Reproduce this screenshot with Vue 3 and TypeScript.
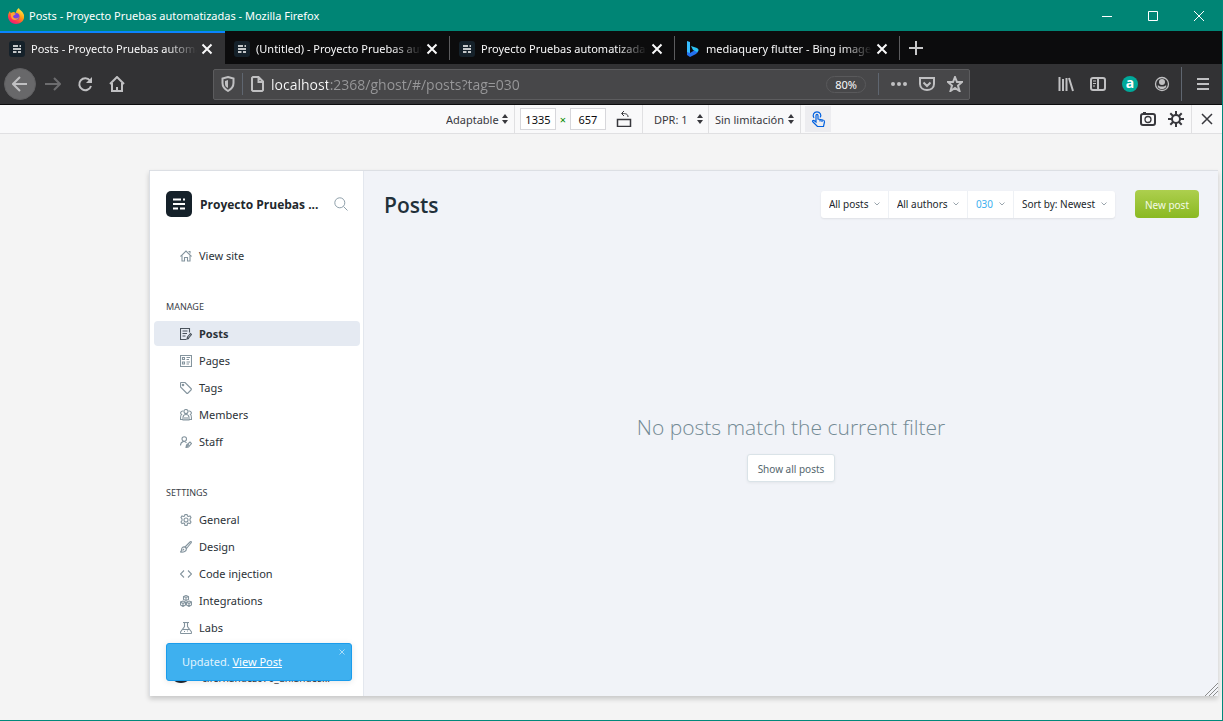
<script setup lang="ts">
import { ref } from 'vue'

interface Tab { title: string; icon: 'ghost' | 'bing' }
interface NavItem { label: string; paths: string[]; active?: boolean }

const tabs: Tab[] = [
  { title: 'Posts - Proyecto Pruebas automatizadas', icon: 'ghost' },
  { title: '(Untitled) - Proyecto Pruebas automatizadas', icon: 'ghost' },
  { title: 'Proyecto Pruebas automatizadas', icon: 'ghost' },
  { title: 'mediaquery flutter - Bing images', icon: 'bing' },
]

const url = ref('localhost:2368/ghost/#/posts?tag=030')
const viewportWidth = ref('1335')
const viewportHeight = ref('657')

const site: NavItem[] = [
  { label: 'View site', paths: ['M1 13L12 2l11 11', 'M4 11v11h5v-7h6v7h5V11', 'M17 3h3v4'] },
]

const manage: NavItem[] = [
  {
    label: 'Posts',
    active: true,
    paths: ['M19 9V1H1v22h11', 'M5 6h10M5 11h9M5 16h6', 'M14 22l1-4 6-7 2 2-6 7zM14 22l4-1'],
  },
  {
    label: 'Pages',
    paths: ['M1 1h22v22H1z', 'M5 5h4v4H5zM5 14h4v4H5z', 'M13 5h7M13 9h5M13 14h7M13 18h5'],
  },
  {
    label: 'Tags',
    paths: ['M1 2v8l12 12c1 1 2 1 3 0l6-6c1-1 1-2 0-3L10 1H2z', 'M4.500 6a1.500 1.500 0 1 0 3 0a1.500 1.500 0 1 0-3 0'],
  },
  {
    label: 'Members',
    paths: [
      'M8 5a4 4 0 1 0 8 0a4 4 0 1 0-8 0', 'M6 22v-5c0-8 12-8 12 0v5z', 'M10 22v-6M14 22v-6',
      'M7 4C1 3 0 9 3 11c-2 1-2 5-2 10h5', 'M17 4c6-1 7 5 4 7 2 1 2 5 2 10h-5',
    ],
  },
  {
    label: 'Staff',
    paths: ['M4 6a4.500 4.500 0 1 0 9 0a4.500 4.500 0 1 0-9 0', 'M1 19c0-9 9-10 12-5', 'M12 23l1-5 7-6 3 3-6 7zM12 23l6-6'],
  },
]

const settings: NavItem[] = [
  {
    label: 'General',
    paths: [
      'M10 1h4l1 3 2 1 3-1 2 3-2 3v3l2 3-2 3-3-1-2 1-1 4h-4l-1-4-2-1-3 1-2-3 2-3v-3L2 7l2-3 3 1 2-1z',
      'M8 12a4 4 0 1 0 8 0a4 4 0 1 0-8 0',
    ],
  },
  { label: 'Design', paths: ['M10 12L20 2c2-2 4 0 2 2L13 15z', 'M10 12c-5-1-7 2-7 6 0 2-1 3-2 4 6 1 12-1 12-7z', 'M5 19l3-3'] },
  { label: 'Code injection', paths: ['M8 5l-7 7 7 7', 'M16 5l7 7-7 7'] },
  {
    label: 'Integrations',
    paths: [
      'M12 1l5 2v6l-5 2-5-2V3zM7 3l5 2 5-2M12 5v6',
      'M6 12l5 2v6l-5 3-5-3v-6zM1 14l5 3 5-3M6 17v6',
      'M18 12l5 2v6l-5 3-5-3v-6zM13 14l5 3 5-3M18 17v6',
    ],
  },
  { label: 'Labs', paths: ['M6 1h12', 'M9 1v8L1 20c-1 2 0 3 2 3h18c2 0 3-1 2-3L15 9V1', 'M5 15h14', 'M8 19h2M14 18h2'] },
]

const groups = [
  { title: '', items: site },
  { title: 'Manage', items: manage },
  { title: 'Settings', items: settings },
]

const filters = [
  { name: 'Post type', value: 'All posts', on: false },
  { name: 'Author', value: 'All authors', on: false },
  { name: 'Tag', value: '030', on: true },
  { name: 'Order', value: 'Sort by: Newest', on: false },
]
</script>

<template>
  <div class="window">
    <header class="titlebar">
      <svg class="firefox" viewBox="0 0 16 16" aria-hidden="true">
        <defs>
          <linearGradient id="fire" x1="0.8" y1="0" x2="0.2" y2="1">
            <stop offset="0" stop-color="#fff44f" />
            <stop offset="0.45" stop-color="#ff980e" />
            <stop offset="0.75" stop-color="#ff3750" />
            <stop offset="1" stop-color="#e31587" />
          </linearGradient>
        </defs>
        <path d="M2 3c0 1 0 1 1 2 1-1 2-1 3-1l2 1c0-2 1-4 3-5 0 2 4 3 5 7 1 5-3 9-8 9S0 12 0 8c0-2 1-4 2-5z" fill="url(#fire)" />
        <circle cx="8" cy="8.500" r="3.500" fill="#7542e5" />
        <path d="M3 5c2 0 4 0 5 1-1 1-3 1-3 3 2 2 4 2 6 0-1 4-8 4-8-1z" fill="#ffa436" />
      </svg>
      <span class="window-title">Posts - Proyecto Pruebas automatizadas - Mozilla Firefox</span>
      <div class="window-buttons">
        <button type="button" aria-label="Minimize"><svg viewBox="0 0 12 12"><path d="M1 6.500h10" /></svg></button>
        <button type="button" aria-label="Maximize"><svg viewBox="0 0 12 12"><path d="M1.500 1.500h9v9h-9z" /></svg></button>
        <button type="button" aria-label="Close"><svg viewBox="0 0 12 12"><path d="M1 1l10 10M11 1L1 11" /></svg></button>
      </div>
    </header>

    <div class="tabs">
      <div v-for="(tab, i) in tabs" :key="i" class="tab" :class="{ current: i === 0 }">
        <button type="button" class="tab-main">
          <svg v-if="tab.icon === 'ghost'" class="favicon" viewBox="0 0 16 16">
            <rect width="16" height="16" rx="3" fill="#15212a" />
            <path d="M4 5h5M10.500 5H12M4 8h8M4 11h3.500M9 11h3" stroke="#fff" stroke-width="1.500" />
          </svg>
          <svg v-else class="favicon" viewBox="0 0 16 16">
            <path d="M3 0l3 1v11l-3 2z" fill="#37bdff" />
            <path d="M3 11l3 1 5-3 3-1c1 3-1 4-2 5l-6 3-3-2z" fill="#2370ee" />
            <path d="M7 5l6 2c2 1 2 3 0 4l-4-2z" fill="#2bc3f5" />
          </svg>
          <span>{{ tab.title }}</span>
        </button>
        <button type="button" class="tab-close" aria-label="Close tab">
          <svg viewBox="0 0 12 12"><path d="M1.500 1.500l9 9M10.500 1.500l-9 9" /></svg>
        </button>
      </div>
      <button type="button" class="new-tab" aria-label="New tab">
        <svg viewBox="0 0 14 14"><path d="M7 0v14M0 7h14" /></svg>
      </button>
    </div>

    <nav class="navbar" aria-label="Browser">
      <button type="button" class="tool back" aria-label="Back">
        <svg viewBox="0 0 16 16"><path d="M15 8H1M8 1L1 8l7 7" /></svg>
      </button>
      <button type="button" class="tool dim" aria-label="Forward">
        <svg viewBox="0 0 16 16"><path d="M0 8h15M9 2l6 6-6 6" /></svg>
      </button>
      <button type="button" class="tool" aria-label="Reload">
        <svg viewBox="0 0 16 16"><path d="M13 4.500A6 6 0 1 0 14 10" /><path d="M15 1v6H9z" class="solid" /></svg>
      </button>
      <button type="button" class="tool" aria-label="Home">
        <svg viewBox="0 0 16 16"><path d="M1 8l7-7 7 7M3 7v8h10V7M8 15v-4" /></svg>
      </button>
      <div class="address">
        <button type="button" class="tool small" aria-label="Tracking protection">
          <svg viewBox="0 0 16 16"><path d="M8 1l5.500 1.500V7c0 4-2 6-5.500 8-3.500-2-5.500-4-5.500-8V2.500z" /><path d="M8 4l-3 1v3c0 2 1 3 3 4z" class="solid" /></svg>
        </button>
        <i class="rule"></i>
        <button type="button" class="tool small" aria-label="Site information">
          <svg viewBox="0 0 16 16"><path d="M4 1h5.500L14 5.500V14l-1 1H4l-1-1V2zM9.500 1v5H14" /></svg>
        </button>
        <input v-model="url" type="text" class="url" aria-label="Address" />
        <button type="button" class="zoom">80%</button>
        <i class="rule end"></i>
        <button type="button" class="tool small" aria-label="Page actions">
          <svg viewBox="0 0 16 16"><g class="solid"><circle cx="2" cy="8" r="2" /><circle cx="8" cy="8" r="2" /><circle cx="14" cy="8" r="2" /></g></svg>
        </button>
        <button type="button" class="tool small" aria-label="Save to Pocket">
          <svg viewBox="0 0 16 16"><path d="M1 2h14v6c0 8-14 8-14 0zM4.500 6.500L8 10l3.500-3.500" /></svg>
        </button>
        <button type="button" class="tool small" aria-label="Bookmark">
          <svg viewBox="0 0 16 16"><path d="M8 1l2 5h5l-4 3.500 1.500 5.500L8 12l-4.500 3L5 9.500 1 6h5z" /></svg>
        </button>
      </div>
      <button type="button" class="tool" aria-label="Library">
        <svg viewBox="0 0 16 16"><path d="M1.500 1v14M5 3v12M8.500 2v13M11 2l4 13" /></svg>
      </button>
      <button type="button" class="tool" aria-label="Sidebars">
        <svg viewBox="0 0 16 16"><rect x="1" y="2" width="14" height="12" rx="2" /><path d="M8 2v12" /><path d="M3 5h3M3 7.500h3M3 10h2" stroke-width="1" /></svg>
      </button>
      <button type="button" class="tool" aria-label="Extension">
        <span class="ext">a</span>
      </button>
      <button type="button" class="tool" aria-label="Account">
        <svg viewBox="0 0 16 16"><circle cx="8" cy="8" r="6.500" stroke-width="1.300" /><circle cx="8" cy="6" r="3" class="solid" /><path d="M4 9c1 2 7 2 8 0 1 2-1 4-4 4s-5-2-4-4z" class="solid" /></svg>
      </button>
      <i class="rule tall"></i>
      <button type="button" class="tool" aria-label="Menu">
        <svg viewBox="0 0 16 16"><path d="M2 3h12M2 8h12M2 13h12" /></svg>
      </button>
    </nav>

    <div class="rdm">
      <div class="rdm-main">
        <label class="pick"><select aria-label="Device"><option>Adaptable</option></select><svg viewBox="0 0 6 10"><path d="M0 4l3-4 3 4zM0 6l3 4 3-4z" /></svg></label>
        <div class="size">
          <input v-model="viewportWidth" type="text" aria-label="Width" />
          <span>×</span>
          <input v-model="viewportHeight" type="text" aria-label="Height" />
          <button type="button" class="plain rotate" aria-label="Rotate">
            <svg viewBox="0 0 16 16"><path d="M1.500 8.500h13v7h-13z" /><path d="M12 6c0-3-2-3.500-6-3.500M8 0L5.500 2.500 8 5" stroke-width="1" /></svg>
          </button>
        </div>
        <label class="pick wide"><select aria-label="Device pixel ratio"><option>DPR: 1</option></select><svg viewBox="0 0 6 10"><path d="M0 4l3-4 3 4zM0 6l3 4 3-4z" /></svg></label>
        <label class="pick"><select aria-label="Throttling"><option>Sin limitación</option></select><svg viewBox="0 0 6 10"><path d="M0 4l3-4 3 4zM0 6l3 4 3-4z" /></svg></label>
        <button type="button" class="touch" aria-label="Touch simulation">
          <svg viewBox="0 0 16 16"><path d="M6 10V4.500c0-1.500 2-1.500 2 0V8l5 1c1 0 1.500 1 1.500 2l-1 4.500h-6L3 11c-1-1 0-2 1-1.500l2 1.500zM10 8.500v2M12 9v2" /><path d="M4 7C2 4 4 .8 7 .8S12 4 10 6.500" /></svg>
        </button>
      </div>
      <div class="rdm-end">
        <button type="button" class="plain" aria-label="Screenshot">
          <svg viewBox="0 0 16 16"><rect x="1" y="3" width="14" height="11" rx="2" stroke-width="2" /><path d="M3 2h3" stroke-width="2" /><circle cx="8" cy="8.500" r="3" stroke-width="1.300" /></svg>
        </button>
        <button type="button" class="plain" aria-label="Settings">
          <svg viewBox="0 0 16 16"><circle cx="8" cy="8" r="4" stroke-width="2" /><path d="M8 0v4M8 12v4M0 8h4M12 8h4M2.300 2.300l3 3M10.700 10.700l3 3M2.300 13.700l3-3M10.700 5.300l3-3" stroke-width="2" /></svg>
        </button>
        <button type="button" class="plain end" aria-label="Close responsive design mode">
          <svg viewBox="0 0 16 16"><path d="M3 3l10 10M13 3L3 13" /></svg>
        </button>
      </div>
    </div>

    <div class="stage">
      <div class="viewport">
        <aside class="sidebar">
          <div class="brand">
            <svg class="logo" viewBox="0 0 26 26"><rect width="26" height="26" rx="5" fill="#15212a" /><path d="M7 8.500h8M17 8.500h2M7 13h12M7 17.500h5M14 17.500h5" stroke="#fff" stroke-width="2" /></svg>
            <strong>Proyecto Pruebas ...</strong>
            <button type="button" class="search" aria-label="Search">
              <svg viewBox="0 0 14 14"><circle cx="5.800" cy="5.800" r="5" /><path d="M9.500 9.500l4 4" /></svg>
            </button>
          </div>
          <section v-for="(group, g) in groups" :key="g" class="group">
            <h2 v-if="group.title">{{ group.title }}</h2>
            <a v-for="item in group.items" :key="item.label" href="#" :class="{ active: item.active }">
              <svg viewBox="0 0 24 24"><path v-for="(d, i) in item.paths" :key="i" :d="d" /></svg>
              <span>{{ item.label }}</span>
            </a>
          </section>
          <div class="account"><i class="avatar"></i><span>c.fernandez070_uniandes...</span></div>
          <div class="toast" role="status">
            <span>Updated. <a href="#">View Post</a></span>
            <button type="button" aria-label="Dismiss"><svg viewBox="0 0 6 6"><path d="M0.500 0.500l5 5M5.500 0.500l-5 5" /></svg></button>
          </div>
        </aside>

        <main class="content">
          <div class="head">
            <h1>Posts</h1>
            <div class="filters">
              <label v-for="f in filters" :key="f.name" :class="{ on: f.on }">
                <select :aria-label="f.name"><option>{{ f.value }}</option></select>
                <svg viewBox="0 0 6 4"><path d="M0.500 0.500L3 3l2.500-2.500" /></svg>
              </label>
            </div>
            <button type="button" class="new-post">New post</button>
          </div>
          <div class="empty">
            <p>No posts match the current filter</p>
            <button type="button">Show all posts</button>
          </div>
          <svg class="grip" viewBox="0 0 14 14"><path d="M1 14L14 1M5 14l9-9M9 14l5-5" /></svg>
        </main>
      </div>
    </div>
  </div>
</template>

<style>
html,
body {
  margin: 0;
  overflow: hidden;
}
</style>

<style scoped>
* {
  box-sizing: border-box;
}
.window {
  display: flex;
  flex-direction: column;
  height: 100vh;
  border-right: 1px solid #00897b;
  border-bottom: 1px solid #00897b;
  background: #f4f4f4;
  font-family: 'Noto Sans', 'Open Sans', sans-serif;
  font-size: 12px;
}
button,
input,
select {
  margin: 0;
  padding: 0;
  border: 0;
  background: none;
  color: inherit;
  font: inherit;
}
select {
  appearance: none;
}
svg {
  display: block;
  flex: none;
  fill: none;
  stroke: currentColor;
}
.titlebar {
  display: flex;
  align-items: center;
  height: 31px;
  padding-left: 8px;
  background: #008575;
  color: #fff;
  font-size: 11px;
}
.firefox,
.favicon {
  width: 16px;
  height: 16px;
  stroke: none;
}
.window-title {
  flex: 1;
  padding-left: 5px;
}
.window-buttons {
  display: flex;
}
.window-buttons button {
  display: grid;
  place-items: center;
  width: 46px;
  height: 31px;
}
.window-buttons svg {
  width: 12px;
  height: 12px;
}
.tabs {
  display: flex;
  height: 33px;
  background: #0c0c0d;
  color: #f9f9fa;
}
.tab {
  display: flex;
  align-items: center;
  width: 225px;
  padding: 2px 8px 0 9px;
  background: linear-gradient(#5c5c5e, #5c5c5e) right 5px / 1px 24px no-repeat;
}
.tab.current {
  padding-top: 0;
  border-top: 2px solid #0a84ff;
  background: #323234;
}
.tab-main {
  display: flex;
  flex: 1;
  align-items: center;
  gap: 6px;
  min-width: 0;
  font-size: 11px;
}
.tab-main span {
  flex: 1;
  overflow: hidden;
  text-align: left;
  white-space: nowrap;
  mask-image: linear-gradient(to left, transparent, #000 30px);
}
.tab-close {
  display: grid;
  place-items: center;
  width: 20px;
  height: 20px;
}
.tab-close svg {
  width: 12px;
  height: 12px;
  stroke-width: 2;
}
.new-tab {
  display: grid;
  place-items: center;
  width: 32px;
  color: #c8c8c9;
}
.new-tab svg {
  width: 14px;
  height: 14px;
  stroke-width: 2;
}
.navbar {
  display: flex;
  align-items: center;
  height: 41px;
  padding: 0 3px 0 4px;
  border-bottom: 1px solid #0c0c0d;
  background: #323234;
  color: #c0c0c2;
}
.tool {
  display: grid;
  flex: none;
  place-items: center;
  width: 32px;
  height: 32px;
}
.tool svg {
  width: 16px;
  height: 16px;
  stroke-width: 2;
}
.tool.small {
  width: 28px;
  height: 28px;
}
.solid {
  fill: currentColor;
  stroke: none;
}
.back {
  margin-right: 1px;
  border: 1px solid #5f5f61;
  border-radius: 50%;
  background: #68686a;
}
.dim {
  color: #6c6c6e;
}
.address {
  display: flex;
  flex: 1;
  align-items: center;
  height: 31px;
  margin: 0 80px;
  border: 1px solid #5c5c5e;
  border-radius: 2px;
  background: #474749;
}
.rule {
  width: 1px;
  height: 22px;
  background: #5f6670;
}
.rule.end {
  margin-right: 6px;
}
.rule.tall {
  height: 34px;
  margin: 0 5px 0 3px;
}
.url {
  flex: 1;
  min-width: 0;
  background: linear-gradient(to right, #f9f9fa 57px, #98989a 57px);
  background-clip: text;
  color: transparent;
  font-family: 'Open Sans', sans-serif;
  font-size: 14px;
}
.zoom {
  height: 17px;
  margin-right: 12px;
  padding: 0 8px;
  border: 1px solid #59595b;
  border-radius: 9px;
  color: #f9f9fa;
  font-size: 11px;
  line-height: 15px;
}
.ext {
  width: 16px;
  height: 16px;
  border-radius: 50%;
  background: #00a99a;
  color: #fff;
  font-size: 14px;
  font-weight: 700;
  line-height: 14px;
  text-align: center;
}
.rdm {
  display: flex;
  height: 29px;
  border-bottom: 1px solid #e0e0e2;
  background: #f9f9fa;
  color: #38383d;
  font-size: 11px;
}
.rdm::before {
  content: '';
  flex: 9;
}
.rdm-main {
  display: flex;
  align-items: stretch;
}
.pick {
  display: flex;
  align-items: center;
  gap: 3px;
  padding: 0 6px;
  border-right: 1px solid #e0e0e2;
}
.pick.wide {
  gap: 9px;
  padding: 0 5px 0 11px;
}
.pick svg {
  width: 6px;
  height: 10px;
  fill: currentColor;
  stroke: none;
}
.size {
  display: flex;
  align-items: center;
  padding: 0 4px 0 5px;
  border-right: 1px solid #e0e0e2;
}
.size input {
  width: 36px;
  height: 22px;
  border: 1px solid #d7d7db;
  background: #fff;
  color: #0c0c0d;
  text-align: center;
}
.size span {
  width: 14px;
  color: #058b00;
  text-align: center;
}
.plain {
  display: grid;
  place-items: center;
  width: 28px;
}
.plain.rotate {
  margin-left: 4px;
}
.plain svg,
.touch svg {
  width: 16px;
  height: 16px;
  stroke-width: 1.5;
}
.touch {
  display: grid;
  place-items: center;
  align-self: center;
  width: 26px;
  height: 26px;
  margin-left: 4px;
  background: #ededf0;
  color: #0060df;
}
.touch svg {
  stroke-width: 1.2;
}
.rdm-end {
  display: flex;
  flex: 8;
  justify-content: flex-end;
}
.plain.end {
  width: 31px;
  margin-left: 1px;
  border-left: 1px solid #e0e0e2;
}
.stage {
  display: flex;
  flex: 1;
  min-height: 0;
  padding: 36px 4px 24px 149px;
}
.viewport {
  display: flex;
  flex: 1;
  border: 1px solid #dcdfe4;
  border-right: 0;
  border-bottom: 0;
  background: #f1f3f8;
  box-shadow: 0 3px 5px rgba(0, 0, 0, 0.18);
  color: #394047;
  font-size: 11px;
}
.sidebar {
  position: relative;
  width: 214px;
  padding: 20px 3px 0 4px;
  border-right: 1px solid #e3e7ee;
  background: #fff;
}
.brand {
  display: flex;
  align-items: center;
  height: 26px;
  padding: 0 12px;
  color: #22272c;
}
.logo {
  width: 26px;
  height: 26px;
  stroke: none;
}
.brand strong {
  flex: 1;
  padding-left: 8px;
  font-family: 'Open Sans', sans-serif;
  font-size: 12px;
  white-space: nowrap;
}
.search {
  color: #8fa0aa;
}
.search svg {
  width: 14px;
  height: 14px;
}
.group {
  display: flex;
  flex-direction: column;
  gap: 2px;
  margin-top: 26px;
}
.group + .group {
  margin-top: 32px;
}
h2 {
  margin: 0 0 5px;
  padding-left: 12px;
  color: #394047;
  font-size: 9px;
  font-weight: 400;
  line-height: 14px;
  text-transform: uppercase;
}
.group a {
  display: flex;
  align-items: center;
  gap: 7px;
  height: 25px;
  padding-left: 26px;
  border-radius: 4px;
  color: #2b3238;
  text-decoration: none;
}
.group a svg {
  width: 12px;
  height: 12px;
  color: #84949e;
  stroke-width: 2.2;
}
.group a.active {
  background: #e5eaf2;
  font-weight: 700;
}
.group a.active svg {
  color: #4a535c;
}
.account {
  position: absolute;
  bottom: 11px;
  left: 20px;
  display: flex;
  align-items: flex-end;
  gap: 10px;
  font-size: 10px;
  line-height: 14px;
}
.avatar {
  width: 22px;
  height: 22px;
  margin-bottom: 2px;
  border-radius: 50%;
  background: #1d2733;
}
.toast {
  position: absolute;
  right: 11px;
  bottom: 15px;
  left: 16px;
  display: flex;
  align-items: center;
  justify-content: space-between;
  height: 38px;
  padding: 0 6px 2px 15px;
  border: 1px solid #1a9cec;
  border-radius: 3px;
  background: #3eb0ef;
  box-shadow: 0 1px 6px rgba(0, 0, 0, 0.1);
  color: #e0f3fd;
}
.toast a {
  color: #fff;
}
.toast button {
  align-self: flex-start;
  padding-top: 5px;
  color: #a8dcf8;
}
.toast svg {
  width: 6px;
  height: 6px;
}
.content {
  position: relative;
  display: flex;
  flex: 1;
  flex-direction: column;
}
.head {
  display: flex;
  align-items: center;
  height: 28px;
  margin: 19px 19px 0 20px;
}
h1 {
  flex: 1;
  margin: 0;
  padding-top: 2px;
  color: #22303a;
  font-family: 'Open Sans', sans-serif;
  font-size: 21px;
  font-weight: 600;
}
.filters {
  display: flex;
  border-radius: 3px;
  background: #fff;
  box-shadow: 0 1px 2px rgba(0, 0, 0, 0.08);
  color: #22272c;
  font-size: 10px;
}
.filters label {
  display: flex;
  align-items: center;
  gap: 5px;
  height: 27px;
  padding: 0 8px;
}
.filters label + label {
  border-left: 1px solid #eef1f5;
}
.filters svg {
  width: 6px;
  height: 4px;
  color: #9aa5ad;
}
.filters .on {
  color: #3eb0ef;
}
.new-post {
  height: 28px;
  margin-left: 20px;
  padding: 2px 10px 0;
  border-radius: 4px;
  background: linear-gradient(#adcf4e, #8ab922);
  color: #f4fae6;
  font-size: 10px;
}
.empty {
  display: flex;
  flex: 1;
  flex-direction: column;
  align-items: center;
  justify-content: center;
  padding-bottom: 22px;
}
.empty p {
  margin: 0 0 11px;
  color: #738a94;
  font-family: 'Open Sans', sans-serif;
  font-size: 21px;
  font-weight: 300;
  line-height: 32px;
}
.empty button {
  height: 28px;
  padding: 2px 10px 0;
  border: 1px solid #dae3e8;
  border-radius: 3px;
  background: #fff;
  box-shadow: 0 1px 3px rgba(0, 0, 0, 0.06);
  color: #54666d;
  font-size: 10px;
}
.grip {
  position: absolute;
  right: 0;
  bottom: 0;
  width: 14px;
  height: 14px;
  color: #8c8c8c;
}
</style>
